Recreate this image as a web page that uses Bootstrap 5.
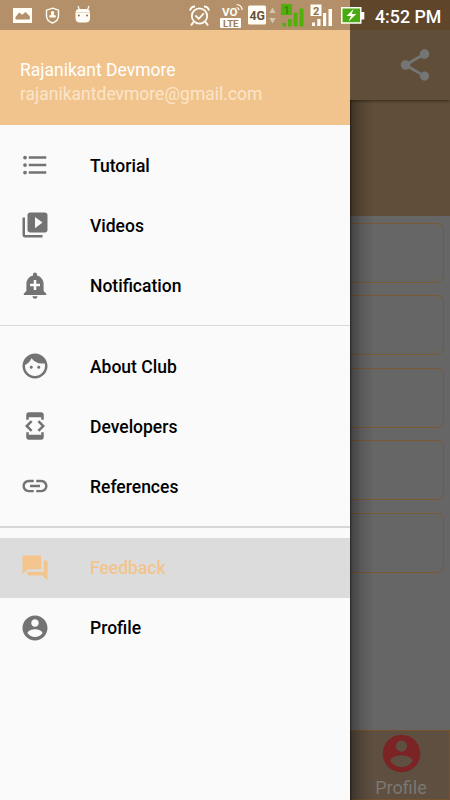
<!DOCTYPE html>
<html lang="en">
<head>
<meta charset="utf-8">
<meta name="viewport" content="width=device-width, initial-scale=1">
<title>Club menu</title>
<link href="https://cdn.jsdelivr.net/npm/bootstrap@5.3.0/dist/css/bootstrap.min.css" rel="stylesheet">
<style>
body{font-family:Roboto,"Noto Sans",sans-serif;background:#666}
.screen{width:450px;height:800px;background:#666}
.appbar{height:100px;padding:30px 16px 0 0;background:#614e38;box-shadow:0 1px 3px rgba(0,0,0,.45);z-index:1}
.banner{height:116px;background:#614e38}
.tiles{padding:6.5px 6.5px 0 6px;gap:12.6px}
.tile{height:60px;border:1.3px solid #7a5a33;border-radius:7px}
.tabbar{height:70px;background:#5e4f41;border:1px solid #75522b}
.tab{width:96px;color:#7b7773;font-size:18px;line-height:23px}
.shade{left:350px;top:30px;width:24px;height:770px;background:linear-gradient(90deg,rgba(0,0,0,.65) 0,rgba(0,0,0,.32) 2px,rgba(0,0,0,.12) 12px,transparent)}
.drawer{width:350px;height:800px;background:#fafafa;z-index:3}
.account{height:125px;background:#f2c48d;padding:58px 20px 0;font-size:17.5px;line-height:24px;color:#fff}
.mail{color:#fbe5c9}
.menu{padding-top:10px}
.entry{height:60px;padding:0 20px;gap:40px;color:#000;font-size:17.5px;font-weight:500}
.entry span{padding-top:2px}
.entry svg{width:30px;height:30px;fill:#737373;flex:none}
.entry.current{background:#dcdcdc;color:#f3c48c}
.entry.current svg{fill:#f3c48c}
.rule{height:1.3px;background:#d8d8d8;margin:10px 0}
.status{height:30px;background:linear-gradient(90deg,#b3906a 350px,#5f4529 350px);z-index:4}
.clock{font-size:17.8px;font-weight:500;color:#fff}
.status text{font-family:Roboto,sans-serif;font-weight:700}
</style>
<script src="https://cdn.jsdelivr.net/npm/bootstrap@5.3.0/dist/js/bootstrap.bundle.min.js"></script>
</head>
<body>
<div class="screen position-relative overflow-hidden d-flex flex-column">
  <header class="appbar position-relative d-flex align-items-center justify-content-end">
    <svg width="38" height="38" viewBox="0 0 24 24" fill="#747575"><path d="M18 16.08c-.76 0-1.44.3-1.96.77L8.91 12.7c.05-.23.09-.46.09-.7s-.04-.47-.09-.7l7.05-4.11c.54.5 1.25.81 2.04.81 1.66 0 3-1.34 3-3s-1.34-3-3-3-3 1.34-3 3c0 .24.04.47.09.7L8.04 9.81C7.5 9.31 6.79 9 6 9c-1.66 0-3 1.34-3 3s1.34 3 3 3c.79 0 1.5-.31 2.04-.81l7.12 4.16c-.05.21-.08.43-.08.65 0 1.61 1.31 2.92 2.92 2.92s2.92-1.31 2.92-2.92-1.31-2.92-2.92-2.92z"/></svg>
  </header>
  <div class="banner"></div>
  <main class="tiles flex-grow-1 d-flex flex-column">
    <div class="tile"></div><div class="tile"></div><div class="tile"></div><div class="tile"></div><div class="tile"></div>
  </main>
  <footer class="tabbar d-flex justify-content-end">
    <div class="tab d-flex flex-column align-items-center">
      <svg width="45" height="45" viewBox="0 0 24 24" fill="#7b2325"><path d="M12 2C6.48 2 2 6.48 2 12s4.48 10 10 10 10-4.480 10-10S17.520 2 12 2zm0 3c1.660 0 3 1.340 3 3s-1.340 3-3 3-3-1.340-3-3 1.340-3 3-3zm0 14.200c-2.500 0-4.710-1.280-6-3.220.030-1.990 4-3.080 6-3.080 1.990 0 5.970 1.090 6 3.080-1.290 1.940-3.500 3.220-6 3.220z"/></svg>
      <span>Profile</span>
    </div>
  </footer>
  <div class="shade position-absolute"></div>

  <aside class="drawer position-absolute top-0 start-0">
    <div class="account"><div>Rajanikant Devmore</div><div class="mail">rajanikantdevmore@gmail.com</div></div>
    <nav class="menu d-flex flex-column">
      <div class="entry d-flex align-items-center"><svg viewBox="0 0 24 24"><circle cx="4" cy="6" r="1.5"/><circle cx="4" cy="12" r="1.5"/><circle cx="4" cy="18" r="1.5"/><path d="M7 5h14v2H7zM7 11h14v2H7zM7 17h14v2H7z"/></svg><span>Tutorial</span></div>
      <div class="entry d-flex align-items-center"><svg viewBox="0 0 24 24"><path d="M4 6H2v14c0 1.100.900 2 2 2h14v-2H4V6zm16-4H8c-1.100 0-2 .900-2 2v12c0 1.100.900 2 2 2h12c1.100 0 2-.900 2-2V4c0-1.100-.900-2-2-2zm-8 12.500v-9l6 4.500-6 4.500z"/></svg><span>Videos</span></div>
      <div class="entry d-flex align-items-center"><svg viewBox="0 0 24 24"><path d="M10.010 21.010c0 1.100.890 1.990 1.990 1.990s1.990-.890 1.990-1.990h-3.980zm8.870-4.190V11c0-3.250-2.250-5.970-5.290-6.690v-.720C13.590 2.710 12.880 2 12 2s-1.590.710-1.590 1.590v.720C7.370 5.030 5.120 7.750 5.120 11v5.820L3 18.940V20h18v-1.060l-2.120-2.120zM16 13.010h-3v3h-2v-3H8V11h3V8h2v3h3v2.010z"/></svg><span>Notification</span></div>
      <div class="rule"></div>
      <div class="entry d-flex align-items-center"><svg viewBox="0 0 24 24"><path d="M9 11.750c-.690 0-1.250.560-1.250 1.250s.560 1.250 1.250 1.250 1.250-.560 1.250-1.250-.560-1.250-1.250-1.250zm6 0c-.690 0-1.250.560-1.250 1.250s.560 1.250 1.250 1.250 1.250-.560 1.250-1.250-.560-1.250-1.250-1.250zM12 2C6.480 2 2 6.480 2 12s4.480 10 10 10 10-4.480 10-10S17.520 2 12 2zm0 18c-4.410 0-8-3.590-8-8 0-.290.020-.580.050-.860 2.360-1.050 4.230-2.980 5.210-5.370C11.070 8.330 14.050 10 17.420 10c.780 0 1.530-.090 2.250-.260.210.710.330 1.470.330 2.260 0 4.410-3.590 8-8 8z"/></svg><span>About Club</span></div>
      <div class="entry d-flex align-items-center"><svg viewBox="0 0 24 24"><path d="M7 5h10v2h2V3c0-1.100-.900-1.990-2-1.990L7 1c-1.100 0-2 .900-2 2v4h2V5zm8.410 11.590L20 12l-4.590-4.590L14 8.830 17.170 12 14 15.170l1.410 1.420zM10 15.170L6.830 12 10 8.830 8.590 7.410 4 12l4.590 4.590L10 15.170zM17 19H7v-2H5v4c0 1.100.900 2 2 2h10c1.100 0 2-.900 2-2v-4h-2v2z"/></svg><span>Developers</span></div>
      <div class="entry d-flex align-items-center"><svg viewBox="0 0 24 24"><path d="M3.900 12c0-1.710 1.390-3.100 3.100-3.100h4V7H7c-2.760 0-5 2.240-5 5s2.240 5 5 5h4v-1.900H7c-1.710 0-3.100-1.390-3.100-3.100zM8 13h8v-2H8v2zm9-6h-4v1.900h4c1.710 0 3.100 1.390 3.100 3.100s-1.390 3.100-3.100 3.100h-4V17h4c2.760 0 5-2.240 5-5s-2.240-5-5-5z"/></svg><span>References</span></div>
      <div class="rule"></div>
      <div class="entry current d-flex align-items-center"><svg viewBox="0 0 24 24"><path d="M21 6h-2v9H6v2c0 .550.450 1 1 1h11l4 4V7c0-.550-.450-1-1-1zm-4 6V3c0-.550-.450-1-1-1H3c-.550 0-1 .450-1 1v14l4-4h10c.550 0 1-.450 1-1z"/></svg><span>Feedback</span></div>
      <div class="entry d-flex align-items-center"><svg viewBox="0 0 24 24"><path d="M12 2C6.480 2 2 6.480 2 12s4.480 10 10 10 10-4.480 10-10S17.520 2 12 2zm0 3c1.660 0 3 1.340 3 3s-1.340 3-3 3-3-1.340-3-3 1.340-3 3-3zm0 14.200c-2.500 0-4.710-1.280-6-3.220.030-1.990 4-3.080 6-3.080 1.990 0 5.970 1.090 6 3.080-1.290 1.940-3.500 3.220-6 3.220z"/></svg><span>Profile</span></div>
    </nav>
  </aside>

  <div class="status position-absolute top-0 start-0 w-100 d-flex">
    <svg width="375" height="30" viewBox="0 0 375 30" fill="#fffdf5" class="flex-shrink-0">
      <!-- picture, shield and robot notifications -->
      <path fill-rule="evenodd" d="M13 8h19v15H13zM15.500 19.500h14.300v-3.200L25.500 12l-3.300 2.700-3-2.200-3.700 4.500z"/>
      <path d="M52.500 8.200l6 2v5.500c0 3.500-2.500 6-6 7.300-3.500-1.300-6-3.800-6-7.300v-5.500z" fill="none" stroke="#fffdf5" stroke-width="1.400"/>
      <circle cx="52.500" cy="12.700" r="1.700"/><path d="M51.600 13h1.800l.6 2 1.800.5v2h-6.600v-2l1.800-.5z"/>
      <path d="M78 6l1.500 4M89 6l-1.500 4" stroke="#fffdf5" stroke-width="1.200"/>
      <path d="M75.500 13q0-4 4-4h6.500q4 0 4 4v5q0 4.500-4.500 4.500h-5.500q-4.500 0-4.500-4.500z"/>
      <path d="M75.500 12.500h14.500" stroke="#dfc9ad" stroke-width=".7"/><circle cx="78.800" cy="15.500" r=".9" fill="#806246"/><circle cx="87" cy="15.500" r=".9" fill="#806246"/>
      <!-- alarm -->
      <g fill="none" stroke="#fffdf5"><circle cx="199.500" cy="16" r="7.700" stroke-width="1.800"/><path d="M195.500 15.500l3.300 3.300 5-5.500" stroke-width="1.800"/><path d="M190 10.500q1-4 5-4M209 10.500q-1-4-5-4M193.500 22l-2.500 3.500M205.500 22l2.500 3.500" stroke-width="2"/></g>
      <!-- VoLTE -->
      <text x="222" y="15.800" font-size="11" textLength="15.500" lengthAdjust="spacingAndGlyphs">VO</text>
      <path d="M236.500 7.500q2.300.3 2.600 2.600M236.700 4.500q5 .5 5.500 5.500" fill="none" stroke="#fffdf5" stroke-width="1.200"/>
      <rect x="220" y="18" width="21" height="10" rx="1"/><text x="223" y="26.800" font-size="9" textLength="15.500" lengthAdjust="spacingAndGlyphs" fill="#a07c58">LTE</text>
      <!-- 4G -->
      <rect x="248" y="5.500" width="18" height="19" rx="1.500"/><text x="249.500" y="19.800" font-size="13" textLength="15.500" lengthAdjust="spacingAndGlyphs" fill="#68503a">4G</text>
      <path d="M272.500 7.500l3.200 5.500h-6.400zM272.500 23.500l3.200-5.500h-6.400z" fill="#d5c5aa"/>
      <!-- SIM signals -->
      <g fill="#50b00a"><path d="M281 4h11v11h-11zM282.500 23h3.500v3.500h-3.500zM288 19h3.800v7.500H288zM293.500 12.500h4v14h-4zM299.500 8.500h4v18h-4z"/></g>
      <text x="283.500" y="14" font-size="11" fill="#3e8510">1</text>
      <rect x="310.500" y="4.500" width="11" height="11.500"/><text x="313" y="14.500" font-size="11" fill="#8c6d4c">2</text>
      <path d="M312 22.500h3v3.500h-3zM317.300 19h3.200v7h-3.200zM323 13h3.200v13H323zM328.500 9h3.500v17h-3.500z"/>
      <!-- charging battery -->
      <path d="M341 7h20.500v5h2.800v7.500h-2.800v4.200H341z"/><path d="M342.500 8.500h17.500v13.700h-17.500z" fill="#49ab13"/>
      <path d="M353.500 9l-7 7h4.500l-2.500 5.500 7.800-7.500h-4.600z"/>
    </svg>
    <div class="clock d-flex align-items-center text-nowrap pt-1">4:52 PM</div>
  </div>
</div>
</body>
</html>
